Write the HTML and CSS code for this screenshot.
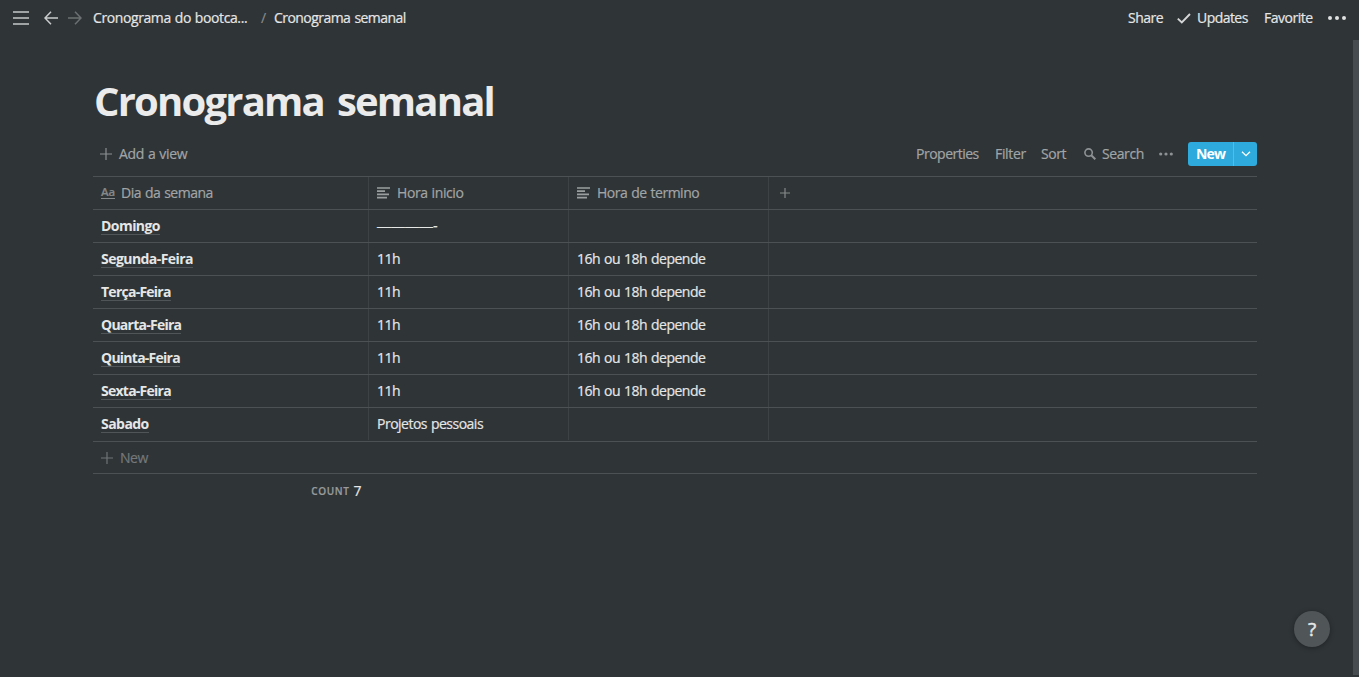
FILE: index.html
```html
<!DOCTYPE html>
<html lang="pt-BR">
<head>
<meta charset="utf-8">
<title>Cronograma semanal</title>
<link rel="stylesheet" href="styles.css">
</head>
<body>
<header class="topbar">
  <svg class="ic-menu" width="16" height="14" viewBox="0 0 16 14"><path d="M0 1h16M0 7h16M0 13h16" stroke="#c6c8c9" stroke-width="1.5"/></svg>
  <svg class="ic-back" width="14" height="14" viewBox="0 0 14 14"><path d="M7 .8L1 7l6 6.200M1 7h13" fill="none" stroke="#c9cbcc" stroke-width="1.500"/></svg>
  <svg class="ic-fwd" width="14" height="14" viewBox="0 0 14 14"><path d="M7 .8L13 7l-6 6.200M13 7H0" fill="none" stroke="#6c7072" stroke-width="1.500"/></svg>
  <span class="crumb crumb-parent">Cronograma do bootca...</span>
  <span class="slash">/</span>
  <span class="crumb crumb-current">Cronograma semanal</span>
  <nav class="actions">
    <span class="share">Share</span>
    <svg class="ic-check" width="14" height="11" viewBox="0 0 14 11"><path d="M.8 5.600L4.800 9.500L13 1" fill="none" stroke="#d5d6d7" stroke-width="1.900"/></svg>
    <span class="updates">Updates</span>
    <span class="favorite">Favorite</span>
    <svg class="ic-dots" width="18" height="4" viewBox="0 0 18 4" fill="#e0e1e1"><circle cx="2" cy="2" r="2"/><circle cx="9" cy="2" r="2"/><circle cx="16" cy="2" r="2"/></svg>
  </nav>
</header>
<main class="page">
  <h1 class="title">Cronograma semanal</h1>
  <div class="toolbar">
    <svg width="12" height="12" viewBox="0 0 12 12"><path d="M6 0v12M0 6h12" stroke="#8d9092" stroke-width="1.200"/></svg>
    <span class="add-view">Add a view</span>
    <div class="tools">
      <span class="t-props">Properties</span>
      <span class="t-filter">Filter</span>
      <span class="t-sort">Sort</span>
      <svg class="ic-search" width="12" height="12" viewBox="0 0 12 12"><circle cx="4.600" cy="4.600" r="3.700" fill="none" stroke="#8f9294" stroke-width="1.600"/><path d="M7.300 7.300l4 4" stroke="#8f9294" stroke-width="2"/></svg>
      <span class="t-search">Search</span>
      <svg class="ic-more" width="14" height="4" viewBox="0 0 14 4" fill="#8f9294"><circle cx="1.700" cy="2" r="1.600"/><circle cx="7" cy="2" r="1.600"/><circle cx="12.300" cy="2" r="1.600"/></svg>
      <div class="new-btn"><span class="new-label">New</span><span class="new-caret"><svg width="10" height="6" viewBox="0 0 10 6"><path d="M1 .7l4 4 4-4" fill="none" stroke="#fff" stroke-width="1.300"/></svg></span></div>
    </div>
  </div>
  <section class="table">
    <div class="row head">
      <div class="cell"><span class="aa">Aa</span><span class="h-dia">Dia da semana</span></div>
      <div class="cell"><svg class="ic-text" width="13" height="12" viewBox="0 0 13 12"><path d="M0 1h13M0 4.200h8M0 7.400h12M0 10.600h10" stroke="#9b9e9f" stroke-width="1.700"/></svg><span class="h-ini">Hora inicio</span></div>
      <div class="cell"><svg class="ic-text" width="13" height="12" viewBox="0 0 13 12"><path d="M0 1h13M0 4.200h8M0 7.400h12M0 10.600h10" stroke="#9b9e9f" stroke-width="1.700"/></svg><span class="h-fim">Hora de termino</span></div>
      <div class="cell add-col"><svg width="10" height="10" viewBox="0 0 10 10"><path d="M5 0v10M0 5h10" stroke="#85898a" stroke-width="1.200"/></svg></div>
    </div>
    <div class="row"><div class="cell"><span class="name">Domingo</span></div><div class="cell"><span class="dash">————-</span></div><div class="cell"></div><div class="cell"></div></div>
    <div class="row"><div class="cell"><span class="name">Segunda-Feira</span></div><div class="cell">11h</div><div class="cell">16h ou 18h depende</div><div class="cell"></div></div>
    <div class="row"><div class="cell"><span class="name tight">Terça-Feira</span></div><div class="cell">11h</div><div class="cell">16h ou 18h depende</div><div class="cell"></div></div>
    <div class="row"><div class="cell"><span class="name tight">Quarta-Feira</span></div><div class="cell">11h</div><div class="cell">16h ou 18h depende</div><div class="cell"></div></div>
    <div class="row"><div class="cell"><span class="name tight">Quinta-Feira</span></div><div class="cell">11h</div><div class="cell">16h ou 18h depende</div><div class="cell"></div></div>
    <div class="row"><div class="cell"><span class="name tight">Sexta-Feira</span></div><div class="cell">11h</div><div class="cell">16h ou 18h depende</div><div class="cell"></div></div>
    <div class="row last"><div class="cell"><span class="name">Sabado</span></div><div class="cell"><span class="proj">Projetos pessoais</span></div><div class="cell"></div><div class="cell"></div></div>
    <div class="new-row"><svg width="12" height="12" viewBox="0 0 12 12"><path d="M6 0v12M0 6h12" stroke="#707476" stroke-width="1.200"/></svg><span>New</span></div>
    <div class="summary"><span class="count">COUNT</span><span class="total">7</span></div>
  </section>
</main>
<div class="scrollbar"></div>
<div class="help">?</div>
</body>
</html>
```
FILE: styles.css
```css
* { box-sizing: border-box; }
body {
  margin: 0;
  height: 677px;
  overflow: hidden;
  background: #2f3437;
  color: #e5e6e6;
  font: 14px/20px "Open Sans", "Noto Sans", sans-serif;
  letter-spacing: -0.48px;
  word-spacing: 0.7px;
  -webkit-text-stroke: 0.2px currentColor;
  white-space: nowrap;
}
svg { display: block; flex: none; }
.topbar { display: flex; align-items: center; height: 36px; padding: 0 13px; }
.ic-back { margin-left: 15px; }
.ic-fwd { margin-left: 10px; }
.crumb-parent { margin-left: 11px; width: 155px; letter-spacing: -0.4px; }
.crumb-current { letter-spacing: -0.55px; word-spacing: 1px; }
.slash { width: 6px; margin: 0 7px 0 13px; color: #888b8d; }
.actions { display: flex; align-items: center; margin-left: auto; }
.share { width: 35px; }
.ic-check { margin-left: 14px; }
.updates { width: 52px; margin-left: 6px; letter-spacing: -0.55px; }
.favorite { width: 49px; margin-left: 15px; }
.ic-dots { margin-left: 15px; }
.page { padding: 0 102px 0 93px; }
.title { margin: 38px 0 0 1px; font-size: 40px; line-height: 54px; font-weight: 700; color: #ebebeb; letter-spacing: -1.8px; word-spacing: 4.5px; -webkit-text-stroke: 0; }
.toolbar { display: flex; align-items: center; height: 48px; padding: 4px 0 0 7px; color: #a2a5a6; }
.add-view { margin-left: 7px; letter-spacing: -0.35px; }
.tools { display: flex; align-items: center; margin-left: auto; }
.t-props { width: 63px; letter-spacing: -0.5px; }
.t-filter { width: 31px; margin-left: 16px; letter-spacing: -0.35px; }
.t-sort { width: 26px; margin-left: 15px; }
.ic-search { margin-left: 17px; }
.t-search { width: 42px; margin-left: 6px; letter-spacing: -0.4px; }
.ic-more { margin-left: 15px; }
.new-btn { display: flex; width: 69px; height: 24px; margin-left: 15px; border-radius: 3px; background: #2eaadc; color: #fff; overflow: hidden; }
.new-label { width: 46px; padding-left: 8px; line-height: 24px; font-weight: 700; letter-spacing: -0.8px; border-right: 1px solid #58bbe3; -webkit-text-stroke: 0; }
.new-caret { display: flex; flex: 1; align-items: center; justify-content: center; }
.table { border-top: 1px solid #4c5154; }
.row { display: grid; grid-template-columns: 276px 200px 200px 1fr; height: 33px; border-bottom: 1px solid #4c5154; }
.cell { display: flex; align-items: center; padding-left: 8px; border-right: 1px solid #3d4245; }
.cell:last-child { border-right: 0; }
.last { height: 34px; padding-bottom: 1px; }
.head { color: #a2a5a6; }
.aa { width: 14px; height: 12px; border-bottom: 1px solid #85898a; font-size: 11.5px; line-height: 9px; font-weight: 600; letter-spacing: -0.2px; color: #85898a; }
.h-dia { margin-left: 6px; }
.h-ini, .h-fim { margin-left: 7px; }
.h-ini { letter-spacing: -0.4px; }
.add-col { padding-left: 11px; }
.name { font-weight: 700; line-height: 17px; border-bottom: 1px solid #505558; letter-spacing: -0.55px; -webkit-text-stroke: 0; }
.tight { letter-spacing: -0.75px; }
.dash { font-family: "Liberation Sans", Arial, sans-serif; letter-spacing: 0; }
.proj { letter-spacing: -0.5px; }
.new-row { display: flex; align-items: center; gap: 7px; height: 32px; padding-left: 8px; border-bottom: 1px solid #4c5154; color: #74787a; }
.summary { display: flex; align-items: center; justify-content: flex-end; width: 268px; height: 34px; }
.count { font-size: 10px; letter-spacing: 0.6px; font-weight: 600; color: #989b9d; margin-right: 4px; }
.scrollbar { position: absolute; left: 1353px; top: 40px; width: 6px; height: 635px; background: #474c50; }
.help { position: absolute; left: 1294px; top: 611px; width: 36px; height: 36px; border-radius: 50%; background: #505558; box-shadow: 0 1px 5px rgba(0,0,0,.35); text-align: center; font-size: 19px; line-height: 37px; letter-spacing: 0; -webkit-text-stroke: 0.5px currentColor; }
```
